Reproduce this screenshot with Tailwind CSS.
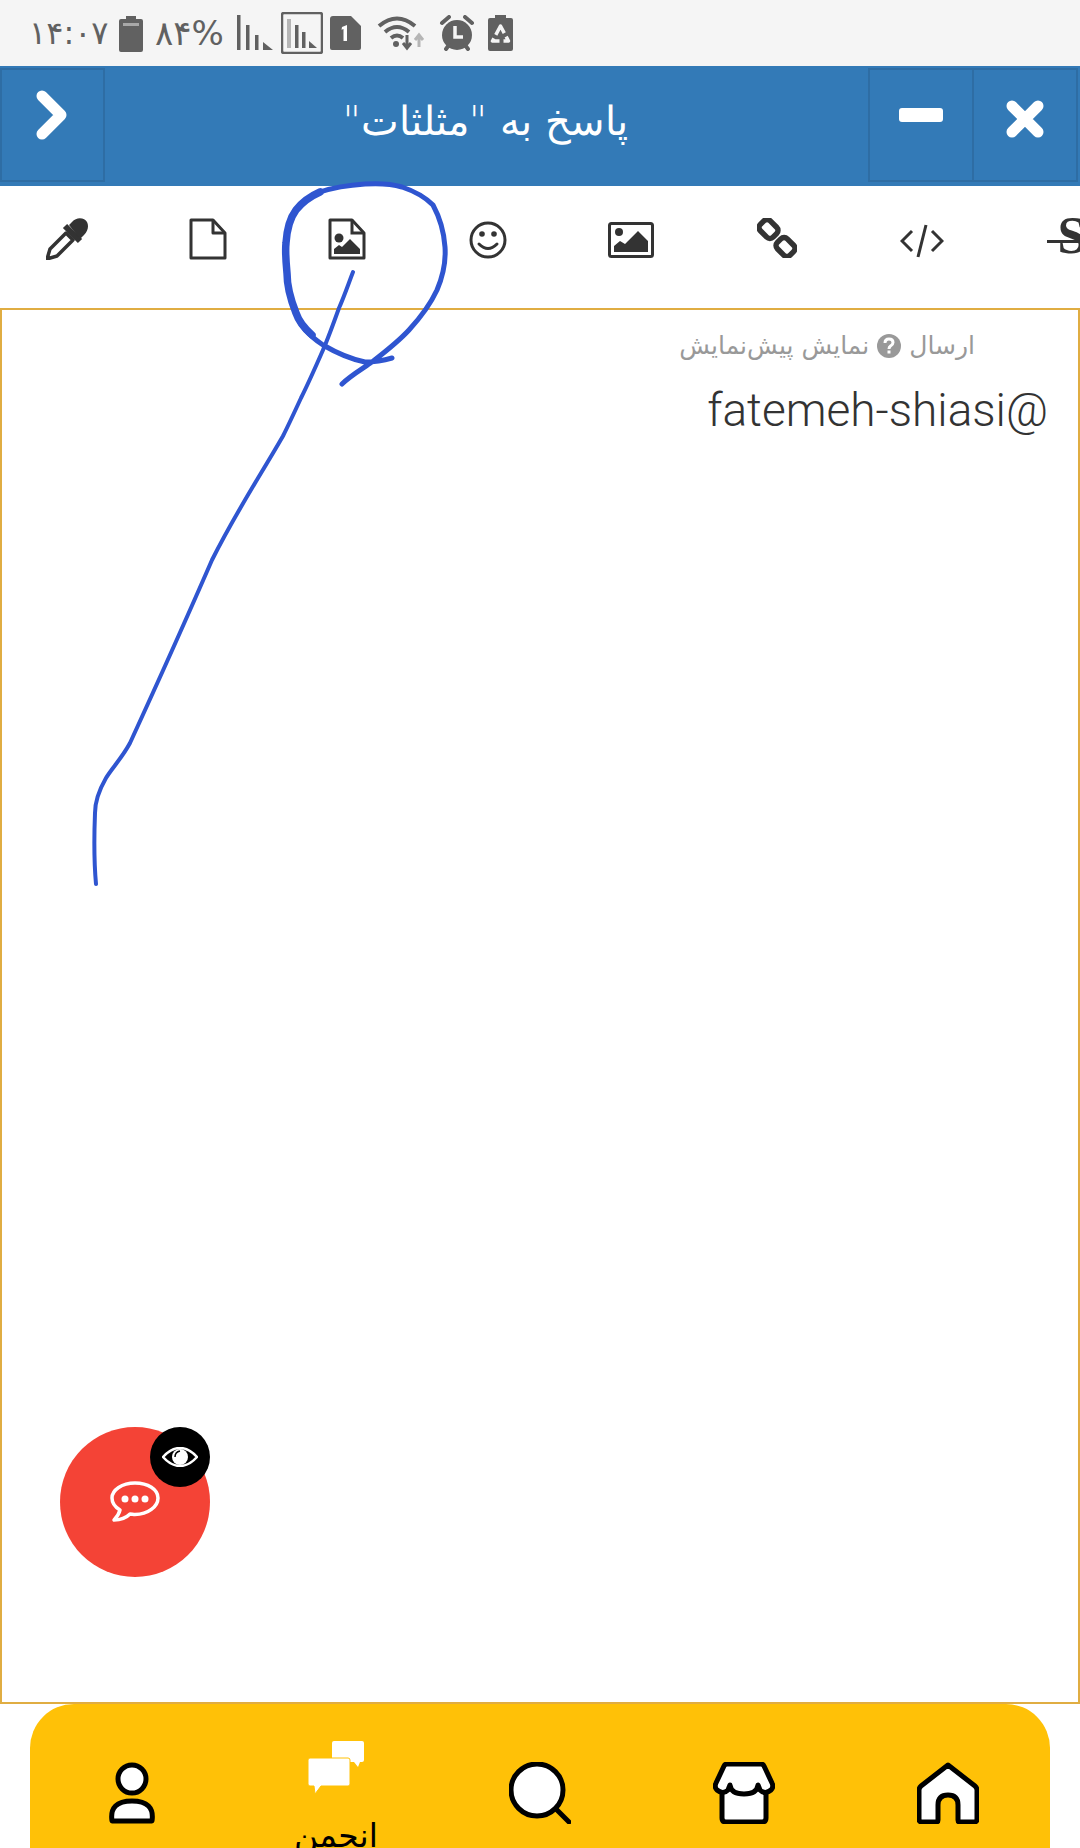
<!DOCTYPE html>
<html lang="fa">
  <head>
    <meta charset="UTF-8" />
    <title>پاسخ به "مثلثات"</title>
    <script src="https://cdn.jsdelivr.net/npm/@tailwindcss/browser@4"></script>
  </head>
  <body class="bg-white">
    <div class="relative w-[1080px] h-[1848px] overflow-hidden flex flex-col font-['DejaVu_Sans',sans-serif]">

      <!-- Status bar -->
      <div class="h-[66px] shrink-0 bg-[#f5f5f5] flex items-center pl-[29px] text-[#616161]">
        <span class="w-[76px] text-[32px] leading-none whitespace-nowrap" dir="ltr">۱۴:۰۷</span>
        <svg class="ml-[14px] mt-[2px]" width="24" height="36" viewBox="0 0 24 36"><path d="M7 0h10v3h5q2 0 2 2v29q0 2-2 2H2q-2 0-2-2V5q0-2 2-2h5z" fill="#616161"/><rect x="4" y="7" width="16" height="3" fill="#a8a8a8"/></svg>
        <span class="ml-[12px] w-[68px] text-[34px] leading-none whitespace-nowrap" dir="ltr">۸۴%</span>
        <svg class="ml-[14px]" width="36" height="36" viewBox="0 0 36 36" fill="#616161"><rect x="0" y="0" width="3.500" height="35"/><rect x="9" y="10" width="3.500" height="25"/><rect x="18" y="20" width="3.500" height="15"/><path d="M26 27l10 8H26z"/></svg>
        <svg class="ml-[8px]" width="42" height="42" viewBox="0 0 42 42"><rect x="1" y="1" width="40" height="40" rx="2" fill="none" stroke="#616161" stroke-width="2.500"/><rect x="6" y="7" width="4" height="29" fill="#b5b5b5"/><rect x="14" y="13" width="3.500" height="23" fill="#616161"/><rect x="21" y="20" width="3.500" height="16" fill="#616161"/><path d="M28 29l8 7h-8z" fill="#616161"/></svg>
        <svg class="ml-[7px]" width="31" height="34" viewBox="0 0 31 34"><path d="M3 0h18l10 10v22q0 2-2 2H2q-2 0-2-2V3q0-3 3-3z" fill="#616161"/><path d="M12 11l5-2v16h-3.500V13l-2 .8z" fill="#fff"/></svg>
        <svg class="ml-[16px]" width="48" height="36" viewBox="0 0 48 36" fill="none"><path d="M2 11Q20-4 38 11" stroke="#616161" stroke-width="4"/><path d="M8 17Q20 7 32 17" stroke="#616161" stroke-width="4"/><path d="M14 23Q20 18 26 23" stroke="#616161" stroke-width="4"/><circle cx="19" cy="29" r="3" fill="#616161"/><path d="M30 20v12M26 28l4 5 4-5" stroke="#616161" stroke-width="3"/><path d="M42 32V21M38 25l4-5 4 5" stroke="#b5b5b5" stroke-width="3"/></svg>
        <svg class="ml-[14px]" width="36" height="37" viewBox="0 0 36 37"><circle cx="18" cy="20" r="15" fill="#616161"/><path d="M3 8l7-6M33 8l-7-6M7 34l3-4M29 34l-3-4" stroke="#616161" stroke-width="4" stroke-linecap="round"/><path d="M16 11v11h8" stroke="#f5f5f5" stroke-width="3.500" fill="none"/></svg>
        <svg class="ml-[13px]" width="25" height="36" viewBox="0 0 25 36"><path d="M7 0h11v3h5q2 0 2 2v29q0 2-2 2H2q-2 0-2-2V5q0-2 2-2h5z" fill="#616161"/><path d="M12.500 11L4.500 26h16z" fill="none" stroke="#f5f5f5" stroke-width="3.500" stroke-dasharray="10 4" stroke-linejoin="round"/></svg>
      </div>

      <!-- Header -->
      <div class="h-[120px] shrink-0 bg-[#337ab7] flex items-stretch pt-[2px] pb-[4px]">
        <button class="w-[105px] border-2 border-[#2e6da4] flex justify-center items-start pt-[20px]">
          <svg width="34" height="50" viewBox="0 0 34 50" fill="none"><path d="M6 6l19 19L6 44" stroke="#fff" stroke-width="11" stroke-linecap="round" stroke-linejoin="round"/></svg>
        </button>
        <div class="flex-1 text-center text-white text-[40px] leading-[106px] font-extralight pr-[3px] whitespace-nowrap" dir="rtl">پاسخ به "مثلثات"</div>
        <button class="w-[106px] border-2 border-[#2e6da4] flex justify-center items-start pt-[38px]">
          <svg width="44" height="14" viewBox="0 0 44 14"><rect width="44" height="14" rx="3" fill="#fff"/></svg>
        </button>
        <button class="w-[106px] border-2 border-[#2e6da4] -ml-[2px] mr-[2px] flex justify-center items-start pt-[30px]">
          <svg width="38" height="38" viewBox="0 0 38 38" fill="none"><path d="M6 6l26 26M32 6L6 32" stroke="#fff" stroke-width="11" stroke-linecap="round"/></svg>
        </button>
      </div>

      <!-- Toolbar -->
      <div class="h-[122px] shrink-0 flex items-start pt-[32px] -ml-[4px] text-[#333] overflow-hidden">
        <div class="w-[142px] shrink-0 flex justify-center">
          <svg width="42" height="42" viewBox="0 0 42 42"><path d="M1 41l3-10L20 15l7 7L11 38z" fill="#fff" stroke="#333" stroke-width="3.500" stroke-linejoin="round"/><path d="M19 8l15 15" stroke="#333" stroke-width="6"/><path d="M23 7l3-3c5-6 13-4 15 0s1 9-3 13l-4 4z" fill="#333"/></svg>
        </div>
        <div class="w-[139px] shrink-0 flex justify-center">
          <svg width="38" height="42" viewBox="0 0 38 42" fill="none" stroke="#333" stroke-width="3" stroke-linejoin="round"><path d="M2 2h22l12 13v25H2z"/><path d="M24 2v13h12"/></svg>
        </div>
        <div class="w-[140px] shrink-0 flex justify-center">
          <svg width="38" height="42" viewBox="0 0 38 42"><path d="M2 2h22l12 13v25H2z" fill="none" stroke="#333" stroke-width="3" stroke-linejoin="round"/><path d="M24 2v13h12" fill="none" stroke="#333" stroke-width="3"/><circle cx="11" cy="20" r="4.500" fill="#333"/><path d="M6 36v-5l5-4 3 2 8-8 10 10v5z" fill="#333"/></svg>
        </div>
        <div class="w-[141px] shrink-0 flex justify-center">
          <svg class="mt-[3px]" width="38" height="38" viewBox="0 0 38 38" fill="none" stroke="#333" stroke-width="3"><circle cx="19" cy="19" r="17"/><path d="M10 23q9 9 18 0" stroke-linecap="round"/><circle cx="13" cy="13" r="2.800" fill="#333" stroke="none"/><circle cx="25" cy="13" r="2.800" fill="#333" stroke="none"/></svg>
        </div>
        <div class="w-[146px] shrink-0 flex justify-center">
          <svg class="mt-[4px]" width="46" height="36" viewBox="0 0 46 36"><rect x="1.500" y="1.500" width="43" height="33" rx="2" fill="none" stroke="#333" stroke-width="3"/><circle cx="11" cy="10" r="4" fill="#333"/><path d="M6 30v-6l6-5 5 3 13-13 10 10v11z" fill="#333"/></svg>
        </div>
        <div class="w-[145px] shrink-0 flex justify-center">
          <svg width="40" height="40" viewBox="0 0 40 40" fill="none" stroke="#333" stroke-width="5.500"><rect x="-9" y="-7" width="18" height="14" rx="4.500" transform="translate(11.500 11) rotate(45)"/><rect x="-9" y="-7" width="18" height="14" rx="4.500" transform="translate(28.500 29) rotate(45)"/></svg>
        </div>
        <div class="w-[145px] shrink-0 flex justify-center">
          <svg class="mt-[6px]" width="44" height="34" viewBox="0 0 44 34" fill="none" stroke="#333" stroke-width="3"><path d="M12 7L2 17l10 10M32 7l10 10-10 10M26 1l-8 32"/></svg>
        </div>
        <div class="w-[144px] shrink-0 flex justify-center relative">
          <span class="-mt-[12px] ml-[12px] text-[52px] leading-[60px] text-[#333] font-['Liberation_Serif',serif] font-bold">S</span>
          <span class="absolute left-[53px] top-[22px] w-[42px] h-[3px] bg-[#333]"></span>
        </div>
      </div>

      <!-- Editor -->
      <div class="h-[1396px] shrink-0 border-2 border-[#e0ad42] pt-[20px] pr-[30px]" dir="rtl">
        <div class="pr-[73px] flex items-center text-[#999] text-[25px] leading-[32px]">
          <span>ارسال</span>
          <svg class="mx-[8px]" width="24" height="24" viewBox="0 0 24 24"><circle cx="12" cy="12" r="12" fill="#999"/><path d="M8 9q0-4 4-4t4 3.500q0 2-2.500 3.500-1.500 1-1.500 3" fill="none" stroke="#fff" stroke-width="3"/><rect x="10.500" y="16.500" width="3" height="3" fill="#fff"/></svg>
          <span>نمایش پیش‌نمایش</span>
        </div>
        <p class="mt-[18px] font-['Roboto',sans-serif] font-light text-[46px] leading-[60px] text-[#333]">@fatemeh-shiasi</p>
      </div>

      <!-- Bottom nav -->
      <nav class="ml-[30px] w-[1020px] flex-1 bg-[#ffc107] rounded-t-[44px] grid grid-cols-5 text-black">
        <div class="flex justify-center pt-[58px]">
          <svg width="46" height="62" viewBox="0 0 46 62" fill="#fff" stroke="#000" stroke-width="5"><circle cx="23" cy="17" r="14"/><path d="M3 59q-3-20 20-20t20 20z" stroke-linejoin="round"/></svg>
        </div>
        <div class="flex flex-col items-center pt-[37px]">
          <svg width="56" height="53" viewBox="0 0 56 53"><path d="M26 0h28q2 0 2 2v17q0 2-2 2h-2l-2 5-4-5H24V2q0-2 2-2z" fill="#fff"/><path d="M2 17h38q2 0 2 2v24q0 2-2 2H13l-6 8-1-8H2q-2 0-2-2V19q0-2 2-2z" fill="#fff" stroke="#ffc107" stroke-width="1"/></svg>
          <span class="mt-[22px] text-[33px] leading-[40px] whitespace-nowrap" dir="rtl">انجمن</span>
        </div>
        <div class="flex justify-center pt-[58px]">
          <svg width="62" height="62" viewBox="0 0 62 62" fill="#fff" stroke="#000" stroke-width="5"><circle cx="28" cy="28" r="26"/><path d="M47 47l13 13" stroke-linecap="round"/></svg>
        </div>
        <div class="flex justify-center pt-[58px]">
          <svg width="62" height="62" viewBox="0 0 62 62" fill="#fff" stroke="#000" stroke-width="5" stroke-linejoin="round"><path d="M9 26v30q0 4 4 4h36q4 0 4-4V26z"/><path d="M14 2h34q2 0 3 2l8 17q2 4-1 7-6 5-11 0l-2-5q-1 9-14 9t-14-9l-2 5q-5 5-11 0-3-3-1-7l8-17q1-2 3-2z"/></svg>
        </div>
        <div class="flex justify-center pt-[58px]">
          <svg width="62" height="62" viewBox="0 0 62 62" fill="#fff" stroke="#000" stroke-width="5" stroke-linejoin="round"><path d="M31 3L58 24q2 2 2 4v29q0 3-3 3H43q-2 0-2-2V43q0-10-10-10T21 43v15q0 2-2 2H5q-3 0-3-3V28q0-2 2-4z"/></svg>
        </div>
      </nav>

      <!-- Floating chat button -->
      <div class="absolute left-[60px] top-[1427px] w-[150px] h-[150px] rounded-full bg-[#f44336] flex items-center justify-center">
        <svg width="50" height="42" viewBox="0 0 50 42" fill="none"><path d="M25 2C12 2 2 9 2 17c0 5 3 9 8 12-1 4-3 7-6 10 6 0 12-2 16-6 2 0 3 .5 5 .5 13 0 23-8 23-16.500S38 2 25 2z" stroke="#fff" stroke-width="3.500" stroke-linejoin="round"/><circle cx="15" cy="18" r="3.500" fill="#fff"/><circle cx="25" cy="18" r="3.500" fill="#fff"/><circle cx="35" cy="18" r="3.500" fill="#fff"/></svg>
        <div class="absolute right-0 top-0 w-[60px] h-[60px] rounded-full bg-black flex items-center justify-center">
          <svg width="36" height="20" viewBox="0 0 36 20"><path d="M1 10Q9 1 18 1t17 9q-8 9-17 9T1 10z" fill="none" stroke="#fff" stroke-width="2.500"/><circle cx="18" cy="10" r="8" fill="#fff"/><path d="M13 10q0-5 5-6" stroke="#000" stroke-width="1.500" fill="none"/></svg>
        </div>
      </div>

      <!-- Hand drawn marker over the screenshot -->
      <svg class="absolute left-0 top-0 pointer-events-none" width="1080" height="1848" viewBox="0 0 1080 1848" fill="none" stroke-linecap="round" stroke-linejoin="round">
        <path d="M392 358C382 361 372 362 365 362C350 359 335 352 323 345C308 335 299 324 296 313C290 298 287 285 287 273C286 262 285 252 286 243C287 228 290 218 296 210C303 201 311 196 320 192C335 187 350 185 365 184C380 183 392 184 402 187C414 191 425 197 433 205C440 218 444 232 445 247C446 262 443 276 437 290C430 305 420 318 409 330C398 342 385 352 372 362C362 369 350 376 342 384" stroke="#2f55d0" stroke-width="5"/>
        <path d="M312 335C304 328 299 322 296 313C290 298 287 285 287 273C286 262 285 252 286 243C287 228 290 218 296 210C303 201 311 196 320 192" stroke="#2f55d0" stroke-width="7.500"/>
        <path d="M353 272C348 285 344 297 339 308C334 322 329 336 323 350C316 366 309 382 301 398C295 411 289 424 283 436C260 476 236 512 212 560C185 622 158 682 130 743C122 758 112 768 106 778C98 792 95 803 95 813C94 838 94 862 96 884" stroke="#2f55d0" stroke-width="4"/>
      </svg>
    </div>
  </body>
</html>
